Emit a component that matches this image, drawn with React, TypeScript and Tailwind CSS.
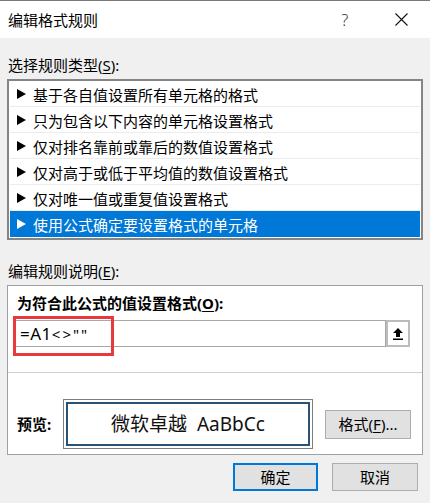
import React from "react";

const rows = [
  "基于各自值设置所有单元格的格式",
  "只为包含以下内容的单元格设置格式",
  "仅对排名靠前或靠后的数值设置格式",
  "仅对高于或低于平均值的数值设置格式",
  "仅对唯一值或重复值设置格式",
  "使用公式确定要设置格式的单元格",
];

const font = { fontFamily: '"Noto Sans", "Noto Sans CJK SC", sans-serif' };

function Tri({ color }: { color: string }) {
  return (
    <svg width="9" height="10" viewBox="0 0 9 10" className="shrink-0">
      <polygon points="0,0 9,5 0,10" fill={color} />
    </svg>
  );
}

export default function App() {
  return (
    <div
      className="w-[430px] h-[503px] bg-[#f0f0f0] border-t border-[#7a7a7a] text-black text-[15px] overflow-hidden"
      style={font}
    >
      {/* title bar */}
      <div className="h-[37px] bg-white flex items-center pl-[8px] pr-[6px]">
        <div className="leading-[20px]">编辑格式规则</div>
        <div className="flex-1" />
        <div className="w-[46px] flex justify-center text-[16px] leading-[20px] text-[#333] font-light">?</div>
        <div className="w-[46px] ml-[10px] flex justify-center">
          <svg width="13" height="13" viewBox="0 0 13 13">
            <path d="M0.5 0.5 L12.5 12.5 M12.5 0.5 L0.5 12.5" stroke="#111" strokeWidth="1.1" />
          </svg>
        </div>
      </div>

      <div className="px-[7px]">
        <div className="mt-[17px] h-[20px] leading-[20px] pl-[1px]">
          选择规则类型(<span className="underline underline-offset-2">S</span>):
        </div>

        {/* list */}
        <div className="mt-[4px] border-2 border-[#858585] bg-white p-[1px] pt-0">
          {rows.map((r, i) => {
            const sel = i === rows.length - 1;
            return (
              <div
                key={i}
                className={
                  "h-[26px] flex items-center pl-[7px] gap-[7px] " +
                  (sel ? "bg-[#0078d7] text-white" : "border-b border-[#ececec]")
                }
              >
                <Tri color={sel ? "#ffffff" : "#000000"} />
                <span className="leading-[20px] pt-[2px]">{r}</span>
              </div>
            );
          })}
        </div>

        <div className="mt-[21px] h-[20px] leading-[20px] pl-[1px]">
          编辑规则说明(<span className="underline underline-offset-2">E</span>):
        </div>

        {/* group box */}
        <div className="mt-[4px] border border-[#a0a0a0] bg-white pb-[5px]">
          <div className="mt-[7px] ml-[9px] h-[20px] leading-[20px] font-bold">
            为符合此公式的值设置格式(<span className="underline underline-offset-2">O</span>):
          </div>
          <div className="relative mt-[7px] ml-[7px] mr-[12px] h-[27px] flex">
            <div className="flex-1 border border-[#a8a8a8] bg-white flex items-center pl-[4px]">
              <span className="text-[17px] leading-[20px] tracking-[0.5px]">
                =A1<span className="tracking-[2px] text-[15px]">&lt;&gt;""</span>
              </span>
            </div>
            <div className="w-[24px] border-2 border-[#bcbcbc] bg-white flex items-center justify-center">
              <svg width="10" height="12" viewBox="0 0 10 12">
                <polygon points="5,0 10,5 7,5 7,9 3,9 3,5 0,5" fill="#000" />
                <rect x="0" y="10.5" width="10" height="1.5" fill="#000" />
              </svg>
            </div>
            <div className="absolute left-[-2px] top-[-4px] w-[101px] h-[40px] border-[3px] border-[#e83a3c]" />
          </div>

          <div className="mt-[25px] h-px bg-[#cfcfcf]" />

          <div className="mt-[26px] flex items-center">
            <div className="w-[55px] pl-[9px] font-bold leading-[20px]">预览:</div>
            <div className="w-[250px] h-[50px] border border-[#7d7d7d] p-[2px]">
              <div className="w-full h-full border-2 border-[#2a5274] flex items-center justify-center text-[19px] text-[#111]">
                <span className="leading-[24px]">微软卓越&nbsp;&nbsp;AaBbCc</span>
              </div>
            </div>
            <div className="ml-[12px] w-[86px] h-[29px] bg-[#e1e1e1] border border-[#adadad] flex items-center justify-center leading-[20px]">
              格式(<span className="underline underline-offset-2">F</span>)...
            </div>
          </div>
        </div>

        {/* buttons */}
        <div className="mt-[8px] flex justify-end gap-[14px] mr-[5px]">
          <div className="w-[85px] h-[28px] bg-[#e1e1e1] border-2 border-[#0078d7] flex items-center justify-center leading-[20px]">
            确定
          </div>
          <div className="w-[86px] h-[28px] bg-[#e1e1e1] border border-[#adadad] flex items-center justify-center leading-[20px]">
            取消
          </div>
        </div>
      </div>
    </div>
  );
}
